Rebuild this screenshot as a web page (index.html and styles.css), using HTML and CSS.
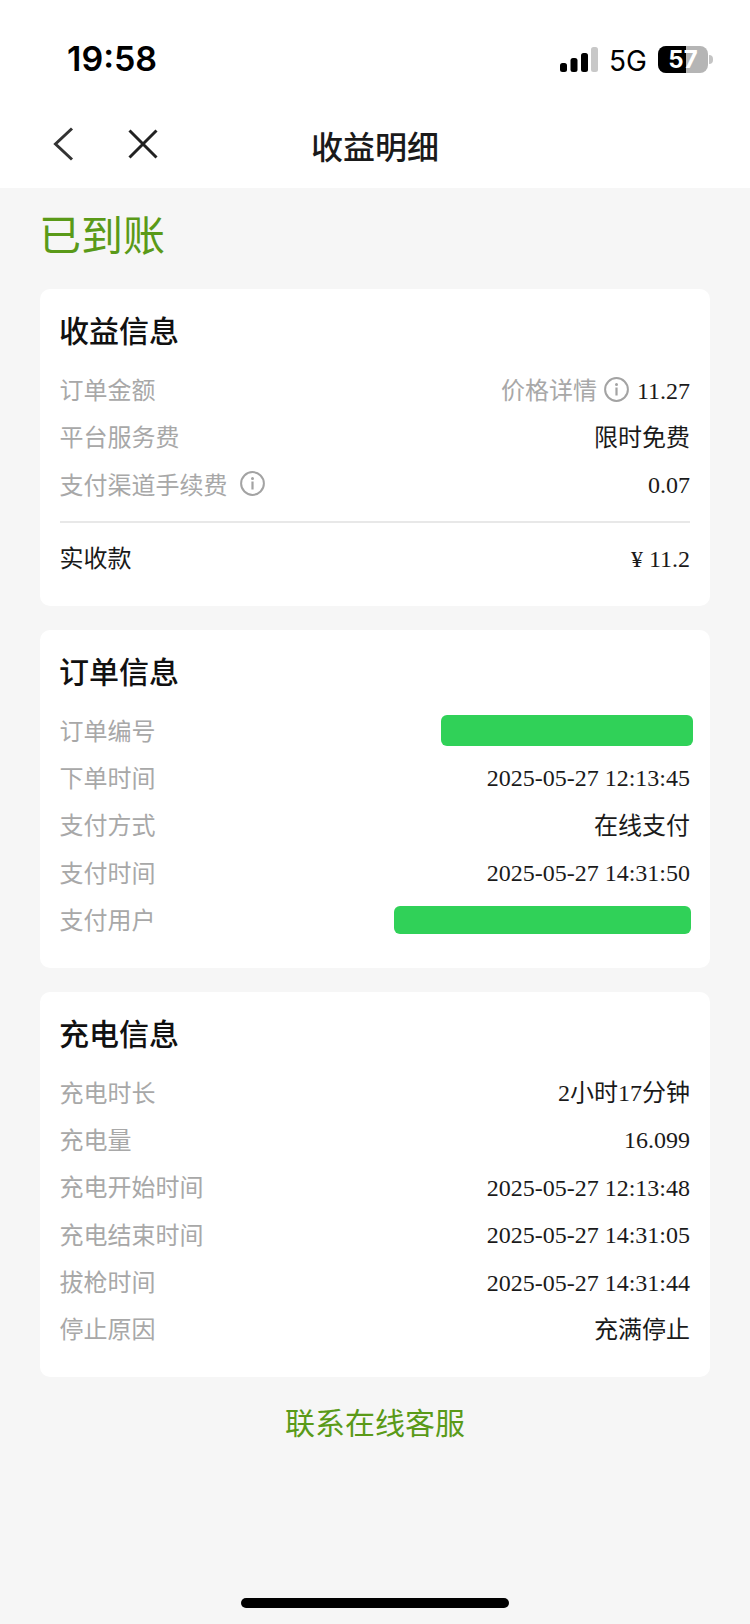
FILE: index.html
```html
<!DOCTYPE html>
<html lang="zh-CN">
<head>
<meta charset="utf-8">
<title>收益明细</title>
<link rel="stylesheet" href="styles.css">
</head>
<body>
<div class="page">
  <header class="header">
    <div class="status">
      <span class="time">19:58</span>
      <div class="status-right">
        <svg class="signal" width="38" height="25" viewBox="0 0 38 25"><rect x="0" y="16" width="7" height="9" rx="2.5" fill="#000"/><rect x="10.5" y="11" width="7" height="14" rx="2.5" fill="#000"/><rect x="21" y="6" width="7" height="19" rx="2.5" fill="#000"/><rect x="31" y="0" width="7" height="25" rx="2.5" fill="#c8c8c8"/></svg>
        <span class="net">5G</span>
        <div class="battery"><div class="battery-body"><span class="battery-fill"></span><span class="battery-num">57</span></div><span class="battery-nub"></span></div>
      </div>
    </div>
    <nav class="nav">
      <svg class="nav-back" width="22" height="34" viewBox="0 0 22 34"><path d="M20 1.5 L3.5 17 L20 32.5" fill="none" stroke="#333" stroke-width="3"/></svg>
      <svg class="nav-close" width="30" height="30" viewBox="0 0 30 30"><path d="M1.5 1.5 L28.5 28.5 M28.5 1.5 L1.5 28.5" fill="none" stroke="#222" stroke-width="3"/></svg>
      <h1 class="nav-title">收益明细</h1>
    </nav>
  </header>
  <main class="content">
    <h2 class="state">已到账</h2>
    <section class="card">
      <h3 class="card-title">收益信息</h3>
      <div class="row"><span class="label">订单金额</span><span class="value"><span class="label">价格详情</span><svg class="info" viewBox="0 0 25 25"><circle cx="12.5" cy="12.5" r="11.4" fill="none" stroke="#a3a3a3" stroke-width="2"/><rect x="11.4" y="10.5" width="2.2" height="8" fill="#a3a3a3"/><circle cx="12.5" cy="7.4" r="1.5" fill="#a3a3a3"/></svg>11.27</span></div>
      <div class="row"><span class="label">平台服务费</span><span class="value">限时免费</span></div>
      <div class="row"><span class="label">支付渠道手续费<svg class="info info-after" viewBox="0 0 25 25"><circle cx="12.5" cy="12.5" r="11.4" fill="none" stroke="#a3a3a3" stroke-width="2"/><rect x="11.4" y="10.5" width="2.2" height="8" fill="#a3a3a3"/><circle cx="12.5" cy="7.4" r="1.5" fill="#a3a3a3"/></svg></span><span class="value">0.07</span></div>
      <div class="divider"></div>
      <div class="row"><span class="label label-dark">实收款</span><span class="value">¥ 11.2</span></div>
    </section>
    <section class="card">
      <h3 class="card-title">订单信息</h3>
      <div class="row"><span class="label">订单编号</span><span class="mask mask-order"></span></div>
      <div class="row"><span class="label">下单时间</span><span class="value">2025-05-27 12:13:45</span></div>
      <div class="row"><span class="label">支付方式</span><span class="value">在线支付</span></div>
      <div class="row"><span class="label">支付时间</span><span class="value">2025-05-27 14:31:50</span></div>
      <div class="row"><span class="label">支付用户</span><span class="mask mask-user"></span></div>
    </section>
    <section class="card">
      <h3 class="card-title">充电信息</h3>
      <div class="row"><span class="label">充电时长</span><span class="value">2小时17分钟</span></div>
      <div class="row"><span class="label">充电量</span><span class="value">16.099</span></div>
      <div class="row"><span class="label">充电开始时间</span><span class="value">2025-05-27 12:13:48</span></div>
      <div class="row"><span class="label">充电结束时间</span><span class="value">2025-05-27 14:31:05</span></div>
      <div class="row"><span class="label">拔枪时间</span><span class="value">2025-05-27 14:31:44</span></div>
      <div class="row"><span class="label">停止原因</span><span class="value">充满停止</span></div>
    </section>
    <a class="service">联系在线客服</a>
  </main>
  <div class="home"></div>
</div>
</body>
</html>
```
FILE: styles.css
```css
* { box-sizing: border-box; }
html, body { margin: 0; padding: 0; }
body {
  width: 750px;
  height: 1624px;
  overflow: hidden;
  background: #f6f6f6;
  font-family: "Noto Sans CJK SC", "Noto Sans", sans-serif;
}
.page { position: relative; width: 750px; height: 1624px; }
.header { height: 188px; background: #fff; }
.status {
  height: 100px;
  display: flex;
  justify-content: space-between;
  align-items: flex-start;
  padding: 38px 37px 0 67px;
}
.time {
  font-family: Inter, "Liberation Sans", sans-serif;
  font-size: 34px;
  line-height: 42px;
  font-weight: 600;
  color: #000;
}
.status-right { display: flex; align-items: center; height: 42px; }
.signal { margin-top: 1px; }
.net {
  font-family: Inter, "Liberation Sans", sans-serif;
  font-size: 28px;
  line-height: 42px;
  color: #000;
  margin-left: 11px;
  padding-top: 4px;
}
.battery { display: flex; align-items: center; margin-left: 11px; }
.battery-body {
  position: relative;
  width: 50px;
  height: 27px;
  border-radius: 8px;
  background: #b5b5b5;
  overflow: hidden;
  display: flex;
  align-items: center;
  justify-content: center;
}
.battery-fill { position: absolute; left: 0; top: 0; bottom: 0; width: 28px; background: #000; }
.battery-num {
  position: relative;
  font-family: Inter, "Liberation Sans", sans-serif;
  font-size: 24px;
  font-weight: 700;
  line-height: 27px;
  color: #fff;
}
.battery-nub { width: 4px; height: 9px; margin-left: 1px; background: #c4c4c4; border-radius: 0 5px 5px 0; }
.nav { position: relative; height: 88px; display: flex; align-items: center; padding-left: 52px; }
.nav-back { margin-top: -1px; }
.nav-close { margin-left: 54px; margin-top: -1px; }
.nav-title {
  position: absolute;
  left: 0;
  right: 0;
  top: 0;
  margin: 0;
  text-align: center;
  font-size: 32px;
  font-weight: 500;
  line-height: 90px;
  color: #1a1a1a;
}
.content { padding: 0 40px; }
.state {
  margin: 0 0 0 -1px;
  height: 101px;
  font-size: 42px;
  font-weight: 400;
  line-height: 90px;
  color: #5a9a18;
}
.card {
  background: #fff;
  border-radius: 10px;
  padding: 17px 20px 24px;
  margin-bottom: 24px;
}
.card-title {
  margin: 0 0 14px -1px;
  font-size: 30px;
  font-weight: 500;
  line-height: 46px;
  color: #111;
}
.row {
  height: 47.4px;
  display: flex;
  justify-content: space-between;
  align-items: center;
  font-size: 24px;
  line-height: 47.4px;
}
.label {
  color: #a8a8a8;
  display: inline-flex;
  align-items: center;
  margin-left: -0.5px;
  padding-bottom: 2px;
}
.label-dark { color: #1a1a1a; }
.value {
  display: inline-flex;
  align-items: center;
  color: #1a1a1a;
  font-family: "Liberation Serif", "Noto Sans CJK SC", serif;
  padding-top: 3px;
}
.value .label { font-family: "Noto Sans CJK SC", sans-serif; margin-left: 0; padding-bottom: 5px; }
.info { width: 25px; height: 25px; margin: 0 8px 0 7px; flex: none; }
.value .info { margin-top: -3px; }
.info-after { margin: 0 0 0 12px; }
.divider { height: 2px; background: #e8e8e8; margin: 13px 0 11px; }
.mask { display: block; background: #30d158; border-radius: 6px; }
.mask-order { width: 252px; height: 31px; margin-right: -3px; }
.mask-user { width: 297px; height: 28px; margin-right: -1px; }
.service {
  display: block;
  text-align: center;
  font-size: 30px;
  line-height: 40px;
  color: #5a9a18;
}
.home {
  position: absolute;
  left: 241px;
  top: 1598px;
  width: 268px;
  height: 10px;
  border-radius: 5px;
  background: #000;
}
```
